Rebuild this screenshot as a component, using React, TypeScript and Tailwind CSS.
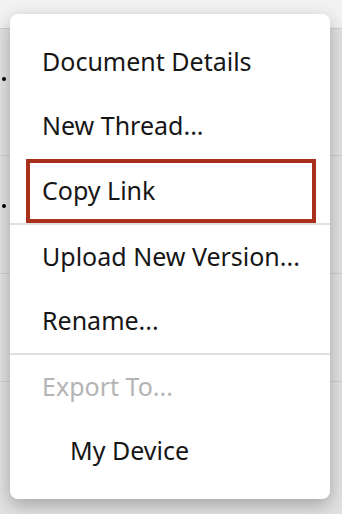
import React from "react";

type Item = { label: string; disabled?: boolean; indent?: boolean; focused?: boolean; divider?: boolean };

const items: Item[] = [
  { label: "Document Details" },
  { label: "New Thread..." },
  { label: "Copy Link", focused: true, divider: true },
  { label: "Upload New Version..." },
  { label: "Rename...", divider: true },
  { label: "Export To...", disabled: true },
  { label: "My Device", indent: true },
];

function BackgroundRow({ h, dot }: { h: string; dot?: boolean }) {
  return (
    <div className={`${h} relative border-b border-[#cfcfcf] bg-[#e2e2e2]`}>
      {dot && <span className="absolute left-[2px] top-[48px] h-[4px] w-[4px] rounded-full bg-black" />}
    </div>
  );
}

export default function App() {
  return (
    <div
      className="relative h-[514px] w-[342px] overflow-hidden bg-[#e2e2e2]"
      style={{ fontFamily: '"Noto Sans", "Open Sans", sans-serif' }}
    >
      {/* Table behind the menu */}
      <div className="h-[29px] border-b border-[#cfcfcf] bg-[#f2f2f2]" />
      <BackgroundRow h="h-[127px]" dot />
      <BackgroundRow h="h-[118px]" dot />
      <BackgroundRow h="h-[108px]" />
      <div className="h-[132px] bg-[#e2e2e2]" />

      {/* Overflow menu */}
      <ul className="absolute left-[10px] top-[14px] w-[320px] rounded-lg bg-white py-4 shadow-[0_6px_18px_rgba(0,0,0,0.28)]">
        {items.map((it) => (
          <li
            key={it.label}
            className={`${it.divider ? "border-b-2 border-[#e0e0e0]" : ""}`}
          >
            <div
              className={`flex h-[64px] items-center pb-[2px] text-[25px] leading-none ${
                it.focused ? "ml-[16px] mr-[14px] mt-[1px] h-[63px] border-[4px] border-[#a8301c] pl-[12px]" : "pl-[32px]"
              } ${it.indent ? "pl-[60px]" : ""} ${it.disabled ? "text-[#b4b4b4]" : "text-[#161616]"}`}
            >
              {it.label}
            </div>
          </li>
        ))}
      </ul>
    </div>
  );
}
